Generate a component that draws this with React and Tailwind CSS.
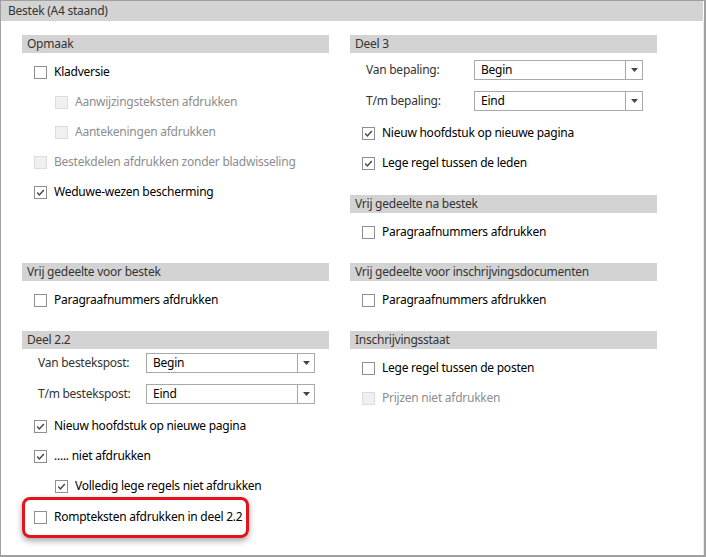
import React from 'react';

const Check = ({ checked, disabled }) => (
    <span className={`w-[13px] h-[13px] shrink-0 border flex items-center justify-center ${disabled ? 'border-[#dcdcdc] bg-[#f0f0f0]' : 'border-[#8f8f8f] bg-white'}`}>
        {checked && (
            <svg width="11" height="11" viewBox="0 0 11 11">
                <path d="M2.2 5.6 L4.4 7.9 L8.8 2.9" fill="none" stroke="#4a4a4a" strokeWidth="1.5" />
            </svg>
        )}
    </span>
);

const Row = ({ label, checked, disabled, indent }) => (
    <div className={`h-[30px] flex items-center gap-[7px] ${indent ? 'pl-[33px]' : 'pl-[12px]'}`}>
        <Check checked={checked} disabled={disabled} />
        <span className={disabled ? 'text-[#8d8d8d]' : 'text-black'}>{label}</span>
    </div>
);

const Header = ({ title, className = '' }) => (
    <div className={`h-[18px] bg-[#d3d3d3] pl-[5px] leading-[18px] text-[#333] ${className}`}>{title}</div>
);

const Select = ({ label, value }) => (
    <div className="flex items-center pl-[16px] h-[20px]">
        <span className="w-[108px] text-[#333]">{label}</span>
        <div className="w-[169px] h-[20px] border border-[#a8a8a8] flex">
            <span className="flex-1 pl-[6px] leading-[18px] text-black">{value}</span>
            <span className="w-[17px] border-l border-[#a8a8a8] flex items-center justify-center">
                <svg width="7" height="4" viewBox="0 0 7 4"><path d="M0 0 H7 L3.5 4 Z" fill="#444" /></svg>
            </span>
        </div>
    </div>
);

export default function App() {
    return (
        <div className="w-[706px] h-[557px] bg-white border-l border-t border-r-2 border-b-2 border-[#a0a0a0] flex flex-col text-[12px] tracking-[-0.25px] text-black" style={{ fontFamily: '"Noto Sans", "Open Sans", sans-serif' }}>
            <div className="h-[20px] bg-[#d3d3d3] pl-[7px] leading-[20px] text-[#333] mr-[1px]">Bestek (A4 staand)</div>
            <div className="flex-1 border-r border-[#ececec] grid grid-cols-[307px_307px] grid-rows-[228px_68px_auto] gap-x-[21px] pl-[21px] pt-[14px]">
                {/* left column */}
                <div>
                    <Header title="Opmaak" />
                    <div className="mt-[4px]">
                        <Row label="Kladversie" />
                        <Row label="Aanwijzingsteksten afdrukken" disabled indent />
                        <Row label="Aantekeningen afdrukken" disabled indent />
                        <Row label="Bestekdelen afdrukken zonder bladwisseling" disabled />
                        <Row label="Weduwe-wezen bescherming" checked />
                    </div>
                </div>

                {/* right column top */}
                <div>
                    <Header title="Deel 3" />
                    <div className="mt-[7px] flex flex-col gap-[11px]">
                        <Select label="Van bepaling:" value="Begin" />
                        <Select label="T/m bepaling:" value="Eind" />
                    </div>
                    <div className="mt-[7px]">
                        <Row label="Nieuw hoofdstuk op nieuwe pagina" checked />
                        <Row label="Lege regel tussen de leden" checked />
                    </div>
                    <Header title="Vrij gedeelte na bestek" className="mt-[17px]" />
                    <div className="mt-[4px]">
                        <Row label="Paragraafnummers afdrukken" />
                    </div>
                </div>

                <div>
                    <Header title="Vrij gedeelte voor bestek" />
                    <div className="mt-[4px]">
                        <Row label="Paragraafnummers afdrukken" />
                    </div>
                </div>

                <div>
                    <Header title="Vrij gedeelte voor inschrijvingsdocumenten" />
                    <div className="mt-[4px]">
                        <Row label="Paragraafnummers afdrukken" />
                    </div>
                </div>

                <div>
                    <Header title="Deel 2.2" />
                    <div className="mt-[4px] flex flex-col gap-[11px]">
                        <Select label="Van bestekspost:" value="Begin" />
                        <Select label="T/m bestekspost:" value="Eind" />
                    </div>
                    <div className="mt-[7px]">
                        <Row label="Nieuw hoofdstuk op nieuwe pagina" checked />
                        <Row label="..... niet afdrukken" checked />
                        <Row label="Volledig lege regels niet afdrukken" checked indent />
                        <div className="relative mt-[1px]">
                            <Row label="Rompteksten afdrukken in deel 2.2" />
                            <div className="absolute left-0 -top-[5px] w-[227px] h-[41px] border-[3px] border-[#e5121b] rounded-[8px] shadow-[0_3px_6px_rgba(0,0,0,0.35)]" />
                        </div>
                    </div>
                </div>

                <div>
                    <Header title="Inschrijvingsstaat" />
                    <div className="mt-[4px]">
                        <Row label="Lege regel tussen de posten" />
                        <Row label="Prijzen niet afdrukken" disabled />
                    </div>
                </div>
            </div>
        </div>
    );
}
